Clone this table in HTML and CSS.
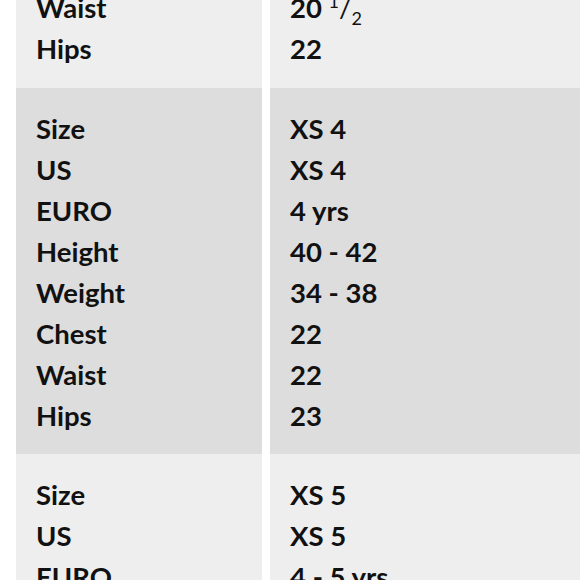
FILE: index.html
```html
<!DOCTYPE html>
<html lang="en">
<head>
<meta charset="utf-8">
<title>Size chart</title>
<link rel="stylesheet" href="styles.css">
</head>
<body>
<table class="chart">
  <tbody>
    <tr class="row row-light row-first">
      <td class="cell cell-label">Size<br>US<br>EURO<br>Height<br>Weight<br>Chest<br>Waist<br>Hips</td>
      <td class="cell cell-value">XS 3<br>XS 3<br>3 yrs<br>37 - 39<br>30 - 33<br>21<br>20 <sup class="frac">1</sup><span class="slash">/</span><sub class="frac">2</sub><br>22</td>
    </tr>
    <tr class="row row-dark">
      <td class="cell cell-label">Size<br>US<br>EURO<br>Height<br>Weight<br>Chest<br>Waist<br>Hips</td>
      <td class="cell cell-value">XS 4<br>XS 4<br>4 yrs<br>40 - 42<br>34 - 38<br>22<br>22<br>23</td>
    </tr>
    <tr class="row row-light">
      <td class="cell cell-label">Size<br>US<br>EURO<br>Height<br>Weight<br>Chest<br>Waist<br>Hips</td>
      <td class="cell cell-value">XS 5<br>XS 5<br>4 - 5 yrs<br>43 - 45<br>39 - 44<br>23<br>23<br>24</td>
    </tr>
  </tbody>
</table>
</body>
</html>
```
FILE: styles.css
```css
html, body {
  background: #ffffff;
}
body {
  margin: 0 0 0 8px;
  overflow: hidden;
  font-family: Lato, "Open Sans", sans-serif;
  color: #111111;
}
.chart {
  border-collapse: separate;
  border-spacing: 8px 0;
  margin-top: -279px;
  width: 720px;
  table-layout: fixed;
}
.cell {
  padding: 20px 20px 17.5px 20px;
  font-size: 27.5px;
  line-height: 41px;
  font-weight: 700;
  vertical-align: top;
}
.row-first .cell {
  padding-bottom: 19px;
}
.cell-label {
  width: 206px;
}
.row-light .cell {
  background: #eeeeee;
}
.row-dark .cell {
  background: #dddddd;
}
.frac {
  font-family: Lato, sans-serif;
  font-size: 18px;
  font-weight: 400;
  line-height: 0;
}
.slash {
  font-weight: 400;
}
```
